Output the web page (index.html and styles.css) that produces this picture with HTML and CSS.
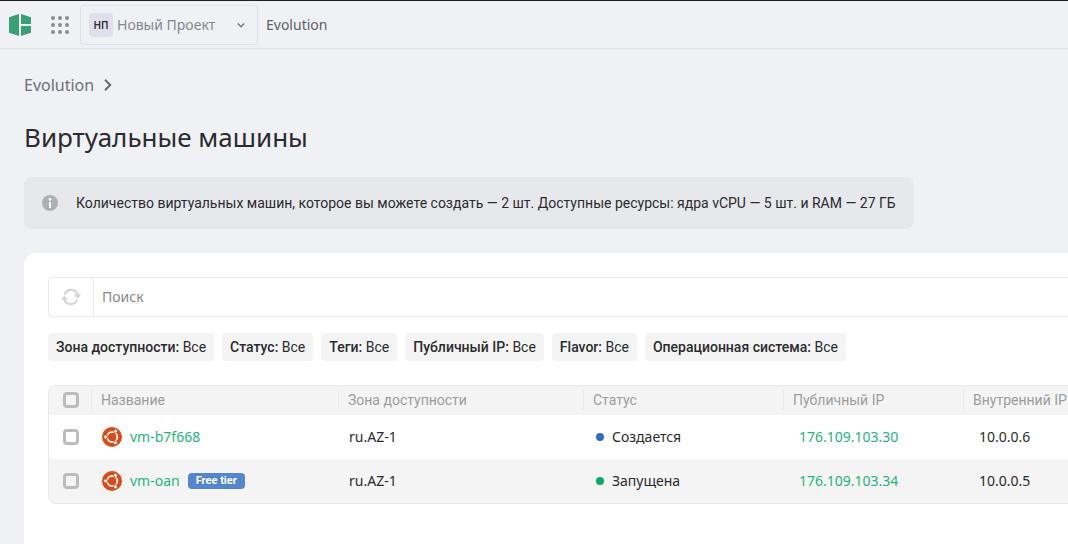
FILE: index.html
```html
<!DOCTYPE html>
<html lang="ru">
<head>
<meta charset="utf-8">
<title>Виртуальные машины</title>
<link rel="stylesheet" href="styles.css">
</head>
<body>
<svg class="sprite" aria-hidden="true">
  <symbol id="ubuntu" viewBox="0 0 20 20">
    <circle cx="10" cy="10" r="10" fill="#dd4814"/>
    <circle cx="10.2" cy="10" r="5" fill="none" stroke="#fff" stroke-width="2"/>
    <g stroke="#dd4814" stroke-width="0.8">
      <path d="M10 10H3M10 10L13.5 3.9M10 10L13.5 16.1"/>
      <circle cx="3.6" cy="10" r="1.9" fill="#fff"/>
      <circle cx="13.5" cy="4.2" r="1.9" fill="#fff"/>
      <circle cx="13.5" cy="15.8" r="1.9" fill="#fff"/>
    </g>
    <circle cx="10.2" cy="10" r="4" fill="#dd4814"/>
  </symbol>
</svg>
<header class="topbar">
  <a class="logo" href="#" aria-label="Главная">
    <svg width="22" height="24" viewBox="0 0 22 24" fill="#38a072"><path d="M0 4.3L10 1v22L0 19.7zM12 1l10 3.3V11H12zM12 13h10v6.7L12 23z"/></svg>
  </a>
  <button class="apps" type="button" aria-label="Сервисы">
    <svg width="20" height="20" viewBox="0 0 20 20" fill="#878995"><circle cx="3" cy="3" r="2"/><circle cx="10" cy="3" r="2"/><circle cx="17" cy="3" r="2"/><circle cx="3" cy="10" r="2"/><circle cx="10" cy="10" r="2"/><circle cx="17" cy="10" r="2"/><circle cx="3" cy="17" r="2"/><circle cx="10" cy="17" r="2"/><circle cx="17" cy="17" r="2"/></svg>
  </button>
  <div class="project">
    <span class="avatar">НП</span>
    <select class="project-select" aria-label="Проект"><option>Новый Проект</option></select>
    <svg width="16" height="16" viewBox="0 0 16 16" fill="none" stroke="#777984" stroke-width="1.6"><path d="M4.8 6.5L8 9.7l3.2-3.2"/></svg>
  </div>
  <a class="platform" href="#">Evolution</a>
</header>
<main class="page">
  <nav class="crumbs" aria-label="Навигация">
    <a href="#">Evolution</a>
    <svg width="10" height="14" viewBox="0 0 10 14" fill="none" stroke="#67696e" stroke-width="2"><path d="M2 1.8L7.2 7 2 12.2"/></svg>
  </nav>
  <h1 class="title">Виртуальные машины</h1>
  <div class="notice">
    <svg width="16" height="16" viewBox="0 0 16 16"><circle cx="8" cy="8" r="8" fill="#b0b0b2"/><circle cx="8" cy="4.4" r="1.3" fill="#fff"/><path d="M7 7h2v6H7z" fill="#fff"/></svg>
    <p>Количество виртуальных машин, которое вы можете создать — 2 шт. Доступные ресурсы: ядра vCPU — 5 шт. и RAM — 27 ГБ</p>
  </div>
  <section class="card">
    <div class="search">
      <button class="refresh" type="button" aria-label="Обновить">
        <svg width="20" height="18" viewBox="0 0 20 18" fill="none" stroke="#d5d5d5" stroke-width="2.2"><path d="M3.8 6.5A6.7 6.7 0 0 1 16.7 7M16.2 11.5A6.7 6.7 0 0 1 3.3 11"/><path d="M13 6.3h7l-3.3 4.4zM0 11.7h7L3.3 7.3z" fill="#d5d5d5" stroke="none"/></svg>
      </button>
      <input class="search-input" type="search" placeholder="Поиск" aria-label="Поиск">
    </div>
    <div class="filters">
      <button class="chip" type="button"><b>Зона доступности:</b> Все</button>
      <button class="chip" type="button"><b>Статус:</b> Все</button>
      <button class="chip" type="button"><b>Теги:</b> Все</button>
      <button class="chip" type="button"><b>Публичный IP:</b> Все</button>
      <button class="chip" type="button"><b>Flavor:</b> Все</button>
      <button class="chip" type="button"><b>Операционная система:</b> Все</button>
    </div>
    <div class="table-wrap">
      <table class="vms">
        <colgroup><col class="w-check"><col class="w-name"><col class="w-zone"><col class="w-status"><col class="w-ip"><col class="w-ip"></colgroup>
        <thead>
          <tr>
            <th class="check"><input type="checkbox" aria-label="Выбрать все"></th>
            <th><span>Название</span></th>
            <th><span>Зона доступности</span></th>
            <th><span>Статус</span></th>
            <th><span>Публичный IP</span></th>
            <th><span>Внутренний IP</span></th>
          </tr>
        </thead>
        <tbody>
          <tr>
            <td class="check"><input type="checkbox" aria-label="Выбрать vm-b7f668"></td>
            <td><div class="name"><svg width="20" height="20"><use href="#ubuntu"/></svg><a href="#">vm-b7f668</a></div></td>
            <td>ru.AZ-1</td>
            <td class="state"><div class="status creating">Создается</div></td>
            <td class="ip"><a href="#">176.109.103.30</a></td>
            <td class="ip">10.0.0.6</td>
          </tr>
          <tr>
            <td class="check"><input type="checkbox" aria-label="Выбрать vm-oan"></td>
            <td><div class="name"><svg width="20" height="20"><use href="#ubuntu"/></svg><a href="#">vm-oan</a><span class="badge">Free tier</span></div></td>
            <td>ru.AZ-1</td>
            <td class="state"><div class="status running">Запущена</div></td>
            <td class="ip"><a href="#">176.109.103.34</a></td>
            <td class="ip">10.0.0.5</td>
          </tr>
        </tbody>
      </table>
    </div>
  </section>
</main>
</body>
</html>
```
FILE: styles.css
```css
* { box-sizing: border-box; }

body {
  margin: 0;
  min-height: 100vh;
  display: flex;
  flex-direction: column;
  overflow-x: hidden;
  background: #f0f1f5;
  color: #2b2b2e;
  font: 14px/20px Roboto, "Noto Sans", sans-serif;
}

a { color: inherit; text-decoration: none; }
button, input, select { font: inherit; color: inherit; }
button { border: 0; background: none; padding: 0; cursor: pointer; }
svg { display: block; flex: none; }
.sprite { position: absolute; width: 0; height: 0; }

.topbar, .crumbs, .title, .search-input, .vms tbody {
  font-family: "Noto Sans", sans-serif;
}

.topbar {
  display: flex;
  align-items: center;
  height: 49px;
  padding-left: 9px;
  border-top: 1px solid #1f1c24;
  border-bottom: 1px solid #dfe0ec;
}
.apps { margin-left: 19px; }
.project {
  display: flex;
  align-items: center;
  width: 178px;
  height: 40px;
  margin: 0 8px 0 10px;
  padding: 0 8px;
  border: 1px solid #dfe0ee;
  border-radius: 4px;
}
.avatar {
  width: 24px;
  margin-right: 4px;
  border-radius: 4px;
  background: #dfe0eb;
  font-size: 10px;
  font-weight: 600;
  line-height: 24px;
  text-align: center;
}
.project-select {
  flex: 1;
  min-width: 0;
  padding: 0;
  border: 0;
  appearance: none;
  background: none;
  color: #85878f;
}
.platform { color: #5c5f69; }

.page {
  flex: 1;
  display: flex;
  flex-direction: column;
  padding: 24px 0 0 24px;
}
.crumbs {
  display: flex;
  align-items: center;
  gap: 9px;
  color: #6f7074;
  font-size: 16px;
  line-height: 24px;
}
.title {
  margin: 20px 0;
  font-size: 26px;
  font-weight: 400;
  line-height: 40px;
}
.notice {
  align-self: flex-start;
  display: flex;
  align-items: center;
  gap: 18px;
  margin-bottom: 24px;
  padding: 16px 18px;
  border-radius: 8px;
  background: #e7e8eb;
}
.notice p { margin: 0; }

.card {
  flex: 1;
  padding: 24px 0 0 24px;
  overflow: hidden;
  border-top-left-radius: 12px;
  background: #fff;
}
.search {
  display: flex;
  height: 40px;
  border: 1px solid #ebebeb;
  border-right: 0;
  border-radius: 4px 0 0 4px;
}
.refresh {
  display: grid;
  place-items: center;
  width: 45px;
  border-right: 1px solid #ebebeb;
}
.search-input {
  flex: 1;
  min-width: 0;
  padding: 0 8px;
  border: 0;
  background: none;
  outline: 0;
}
.search-input::placeholder { color: #87888c; }

.filters {
  display: flex;
  flex-wrap: wrap;
  gap: 8px;
  margin: 16px 0 24px;
}
.chip {
  padding: 4px 8px;
  border-radius: 4px;
  background: #f4f4f4;
  white-space: nowrap;
}
.chip b { font-weight: 500; }

.table-wrap {
  overflow: hidden;
  border: 1px solid #e8e8e8;
  border-right: 0;
  border-radius: 8px 0 0 8px;
}
.vms {
  width: 1094px;
  table-layout: fixed;
  border-collapse: collapse;
}
.w-check { width: 42px; }
.w-name { width: 247px; }
.w-zone { width: 245px; }
.w-status { width: 200px; }
.w-ip { width: 180px; }
.vms th {
  height: 29px;
  padding: 0 0 1px;
  background: #f4f4f4;
  color: #9c9c9c;
  font-weight: 400;
  text-align: left;
  white-space: nowrap;
}
.vms th span {
  display: block;
  padding-left: 9px;
  border-left: 1px solid #e9e9e9;
}
.vms td { height: 44px; padding: 0 0 0 11px; }
.vms td.state { padding-left: 13px; }
.vms td.ip { padding-left: 16px; }
.vms tbody tr:nth-child(even) { background: #f4f4f4; }
.vms .check { padding-left: 14px; }
.vms a { color: #1fb57c; }
.check input {
  display: block;
  width: 16px;
  height: 16px;
  margin: 0;
  appearance: none;
  border: 3px solid #bcbcbc;
  border-radius: 4px;
}
.name { display: flex; align-items: center; gap: 8px; }
.badge {
  padding: 0 8px;
  border-radius: 4px;
  background: #5485d0;
  color: #fff;
  font-family: Roboto, sans-serif;
  font-size: 11px;
  font-weight: 700;
  line-height: 16px;
}
.status { display: flex; align-items: center; gap: 8px; }
.status::before {
  content: "";
  width: 8px;
  height: 8px;
  border-radius: 50%;
}
.creating::before { background: #3069c5; }
.running::before { background: #0aaa6b; }
```
